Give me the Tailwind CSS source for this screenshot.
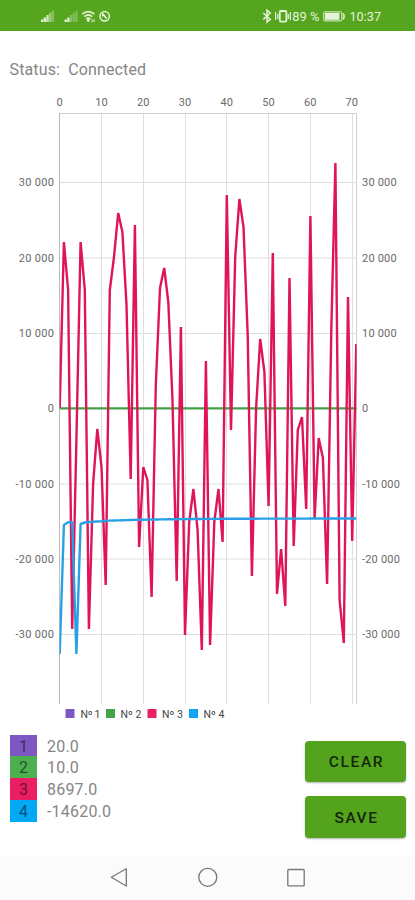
<!DOCTYPE html>
<html lang="en">
<head>
    <meta charset="UTF-8">
    <meta name="viewport" content="width=device-width, initial-scale=1.0">
    <title>Sensor Monitor</title>
    <script src="https://cdn.jsdelivr.net/npm/@tailwindcss/browser@4"></script>
</head>
<body class="bg-white font-['Roboto',sans-serif]">
    <div class="flex flex-col w-[415px] h-[900px] overflow-hidden">
        <!-- Status bar -->
        <header class="h-[31px] shrink-0 bg-[#56a51f] text-[#e4f3d8]">
            <svg class="block" width="415" height="31" viewBox="0 0 415 31" fill="currentColor">
                <!-- Signal 1 -->
                <g>
                    <rect x="41" y="19.5" width="2.3" height="2.5"/>
                    <rect x="43.7" y="17.5" width="2.3" height="4.5"/>
                    <rect x="46.4" y="15" width="2.3" height="7" opacity=".85"/>
                    <rect x="49.1" y="12.7" width="2.3" height="9.3" opacity=".5"/>
                    <rect x="51.8" y="10.5" width="2.3" height="11.5" opacity=".35"/>
                </g>
                <!-- Signal 2 -->
                <g>
                    <rect x="64.5" y="19.5" width="2.3" height="2.5"/>
                    <rect x="67.2" y="17.5" width="2.3" height="4.5"/>
                    <rect x="69.9" y="15" width="2.3" height="7" opacity=".35"/>
                    <rect x="72.6" y="12.7" width="2.3" height="9.3" opacity=".3"/>
                    <rect x="75.3" y="10.5" width="2.3" height="11.5" opacity=".3"/>
                </g>
                <!-- Wifi -->
                <g fill="none" stroke="currentColor" stroke-width="1.6">
                    <path d="M82.2 14.2Q88.3 9 94.4 14.2"/>
                    <path d="M84.3 16.7Q88.3 13.2 92.3 16.7"/>
                    <path d="M86.2 19Q88.3 17.2 90.4 19"/>
                </g>
                <circle cx="88.3" cy="20.5" r="1.4"/>
                <path d="M91.3 19.2h1.4v3h-1.4zM93.4 19.2h1.4v3h-1.4z" opacity=".7"/>
                <!-- Data saver -->
                <circle cx="104.7" cy="16.3" r="4.7" fill="none" stroke="currentColor" stroke-width="1.5"/>
                <path d="M102.6 13.2l4 5.6M102.6 13.4v3" fill="none" stroke="currentColor" stroke-width="1.5"/>
                <!-- Bluetooth -->
                <path d="M263.3 13l7 6.4-3.3 2.7V10.2l3.3 2.8-7 6.4" fill="none" stroke="currentColor" stroke-width="1.5"/>
                <!-- Vibrate -->
                <g fill="none" stroke="currentColor" stroke-width="1.8">
                    <rect x="279.8" y="11" width="6.6" height="10.6" rx="1"/>
                    <path d="M275.6 12v8M277.9 14v5M288.3 14v5M290.4 12v8" stroke-width="1.2"/>
                </g>
                <text x="292.3" y="21" font-size="13" textLength="27" lengthAdjust="spacingAndGlyphs">89 %</text>
                <!-- Battery -->
                <rect x="323.8" y="11.9" width="18" height="9" rx="1" fill="none" stroke="currentColor" stroke-width="1"/>
                <rect x="325" y="13" width="14.4" height="6.8"/>
                <path d="M343.2 13.4q2 3 0 6" fill="none" stroke="currentColor" stroke-width="1.4"/>
                <text x="349.5" y="21" font-size="13" textLength="31.5" lengthAdjust="spacingAndGlyphs">10:37</text>
            </svg>
        </header>

        <main class="flex flex-col h-[825px] shrink-0">
            <p class="h-[64px] shrink-0 pl-[9.5px] pt-[27px] text-[16px] leading-6 tracking-[0.13px] text-[#858585] whitespace-pre">Status:  Connected</p>

            <!-- Chart -->
            <svg class="block shrink-0" width="415" height="630" viewBox="0 95 415 630">
                <defs>
                    <clipPath id="plot">
                        <rect x="59.5" y="113" width="297.2" height="591"/>
                    </clipPath>
                </defs>
                <g stroke="#dedede" stroke-width="1">
                    <path d="M101.5 114V704M143.5 114V704M185.5 114V704M226.5 114V704M268.5 114V704M310.5 114V704M352.5 114V704"/>
                    <path d="M60 182.5H356M60 258H356M60 333.5H356M60 408.5H356M60 484H356M60 559H356M60 634.5H356"/>
                </g>
                <path d="M59.5 113.5H356.5V704" fill="none" stroke="#d0d0d0"/>
                <path d="M59.5 113V704" stroke="#bcbcbc"/>
                <g clip-path="url(#plot)" fill="none" stroke-width="2.4" stroke-linejoin="bevel">
                    <path d="M59.7 408.4H357" stroke="#43a047"/>
                    <polyline id="series3" stroke="#e0145a"/>
                    <polyline id="series4" stroke="#29a0e6"/>
                </g>
                <g font-size="11" fill="#6a6a6a" text-anchor="middle">
                    <text x="59.7" y="106">0</text>
                    <text x="101.5" y="106">10</text>
                    <text x="143.2" y="106">20</text>
                    <text x="185" y="106">30</text>
                    <text x="226.7" y="106">40</text>
                    <text x="268.5" y="106">50</text>
                    <text x="310.2" y="106">60</text>
                    <text x="351.8" y="106">70</text>
                </g>
                <g font-size="11" fill="#6a6a6a" text-anchor="end" letter-spacing=".3">
                    <text x="54.3" y="186">30 000</text>
                    <text x="54.3" y="261.5">20 000</text>
                    <text x="54.3" y="337">10 000</text>
                    <text x="54.3" y="412">0</text>
                    <text x="54.3" y="487.5">-10 000</text>
                    <text x="54.3" y="562.5">-20 000</text>
                    <text x="54.3" y="638">-30 000</text>
                </g>
                <g font-size="11" fill="#6a6a6a" letter-spacing=".2">
                    <text x="362" y="186">30 000</text>
                    <text x="362" y="261.5">20 000</text>
                    <text x="362" y="337">10 000</text>
                    <text x="362" y="412">0</text>
                    <text x="362" y="487.5">-10 000</text>
                    <text x="362" y="562.5">-20 000</text>
                    <text x="362" y="638">-30 000</text>
                </g>
                <!-- Legend -->
                <rect x="65.5" y="709" width="9" height="9" fill="#7e57c2"/>
                <rect x="106" y="709" width="9" height="9" fill="#43a547"/>
                <rect x="147.5" y="709" width="9" height="9" fill="#e91e63"/>
                <rect x="189" y="709" width="9" height="9" fill="#12a2f2"/>
                <g font-size="10.5" fill="#444">
                    <text x="80.5" y="718" textLength="20">Nº 1</text>
                    <text x="120.5" y="718" textLength="21">Nº 2</text>
                    <text x="162" y="718" textLength="21">Nº 3</text>
                    <text x="203.5" y="718" textLength="21">Nº 4</text>
                </g>
            </svg>

            <!-- Current values and actions -->
            <section class="flex justify-between pl-[10px] pr-[9px] pt-[9.5px]">
                <div class="grid grid-cols-[27px_auto] auto-rows-[21.9px] gap-x-[10px] text-[16px] leading-[23px] tracking-[0.2px] text-[#858585]">
                    <span class="bg-[#7e57c2] text-center text-black/55">1</span>
                    <span>20.0</span>
                    <span class="bg-[#4caf50] text-center text-black/55">2</span>
                    <span>10.0</span>
                    <span class="bg-[#e91e63] text-center text-black/55">3</span>
                    <span>8697.0</span>
                    <span class="bg-[#03a9f4] text-center text-black/55">4</span>
                    <span>-14620.0</span>
                </div>
                <div class="flex flex-col gap-[14px] pt-[6px]">
                    <button id="clear" class="w-[101px] h-[41.5px] pt-[3px] pl-[2px] rounded bg-[#53a31c] text-[#14260a] text-[15.5px] font-medium tracking-[1.6px] shadow-[0_1px_2px_rgba(0,0,0,0.3)]">CLEAR</button>
                    <button id="save" class="w-[101px] h-[41.5px] pt-[3px] pl-[2px] rounded bg-[#53a31c] text-[#14260a] text-[15.5px] font-medium tracking-[1.6px] shadow-[0_1px_2px_rgba(0,0,0,0.3)]">SAVE</button>
                </div>
            </section>
        </main>

        <!-- Navigation bar -->
        <nav class="h-[44px] shrink-0 bg-[#fbfbfb]">
            <svg class="block" width="415" height="44" viewBox="0 856 415 44" fill="none" stroke="#777" stroke-width="1.3" stroke-linejoin="round">
                <path d="M111.3 877.3L126.3 868.8V886z"/>
                <circle cx="207.8" cy="877.3" r="9"/>
                <rect x="287.8" y="869.5" width="16.4" height="16.4" rx="1"/>
            </svg>
        </nav>
    </div>

    <script>
        // Screen height of every sample, one sample per x unit
        const series3 = [
            408, 242, 290, 629, 440, 242, 290, 629, 484, 429,
            467, 585, 290, 257, 213, 232, 305, 479, 225, 547,
            467, 480, 597, 385, 288, 268, 302, 400, 581, 327,
            635, 522, 489, 530, 650, 361, 645, 522, 489, 542,
            195, 430, 257, 199, 227, 335, 576, 408, 339, 372,
            506, 253, 594, 549, 606, 278, 546, 430, 417, 509,
            216, 519, 438, 458, 584, 330, 163, 600, 643, 297,
            541, 344
        ];
        const series4 = [654, 525, 522.3, 522, 654, 524, 522.5, 522, 521.8, 521.5, 521.2];
        for (let i = 11; i <= 71; i++) {
            series4.push(518.5 + 2.5 * Math.exp(-(i - 10) / 14));
        }

        function toPoints(values) {
            return values.map((y, i) => (59.7 + i * 4.178).toFixed(1) + ',' + y).join(' ');
        }

        document.getElementById('series3').setAttribute('points', toPoints(series3));
        document.getElementById('series4').setAttribute('points', toPoints(series4));
    </script>
</body>
</html>
